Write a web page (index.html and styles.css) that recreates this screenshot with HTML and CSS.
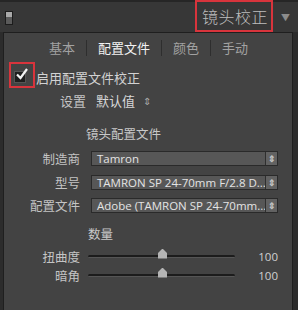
FILE: index.html
```html
<!DOCTYPE html>
<html lang="zh">
<head>
  <meta charset="utf-8">
  <title>镜头校正</title>
  <link rel="stylesheet" href="styles.css">
</head>
<body>
  <div class="header">
    <span class="toggle"></span>
    <span class="title">镜头校正</span>
    <span class="arrow">▼</span>
  </div>
  <div class="panel">
    <div class="tabs">
      <span class="tab">基本</span>
      <span class="sep"></span>
      <span class="tab active">配置文件</span>
      <span class="sep"></span>
      <span class="tab">颜色</span>
      <span class="sep"></span>
      <span class="tab">手动</span>
    </div>

    <div class="check-row">
      <span class="check-mark">
        <span class="box"></span>
        <svg class="tick" width="14" height="14" viewBox="0 0 14 14"><path d="M2 7.5 L5.5 11 L12 2" fill="none" stroke="#f2f2f2" stroke-width="2.2"/></svg>
      </span>
      <span class="check-text">启用配置文件校正</span>
    </div>

    <div class="setting">
      <span class="setting-label">设置</span>
      <span class="setting-value">默认值</span>
      <span class="updown">⇕</span>
    </div>

    <div class="section-title">镜头配置文件</div>

    <div class="row">
      <span class="label">制造商</span>
      <div class="select"><span class="select-text">Tamron</span><span class="stepper">⇕</span></div>
    </div>
    <div class="row">
      <span class="label">型号</span>
      <div class="select"><span class="select-text">TAMRON SP 24-70mm F/2.8 D...</span><span class="stepper">⇕</span></div>
    </div>
    <div class="row">
      <span class="label">配置文件</span>
      <div class="select"><span class="select-text">Adobe (TAMRON SP 24-70mm...</span><span class="stepper">⇕</span></div>
    </div>

    <div class="section-title amount">数量</div>

    <div class="slider-row">
      <span class="label">扭曲度</span>
      <div class="track"><span class="thumb"></span></div>
      <span class="value">100</span>
    </div>
    <div class="slider-row">
      <span class="label">暗角</span>
      <div class="track"><span class="thumb"></span></div>
      <span class="value">100</span>
    </div>
  </div>
</body>
</html>
```

FILE: styles.css
```css
*{
  margin: 0;
  padding: 0;
  box-sizing: border-box;
}

body{
  width: 298px;
  height: 310px;
  overflow: hidden;
  background: #2c2c2c;
  font-family: "Noto Sans CJK SC", "Noto Sans", sans-serif;
  color: #c4c4c4;
}

.header{
  height: 32px;
  border-top: 2px solid #262626;
  background: #373737;
  display: flex;
  align-items: center;
  position: relative;
}

.toggle{
  width: 8px;
  height: 14px;
  margin: 1px 0 0 5px;
  border: 1px solid #1c1c1c;
  background: linear-gradient(#a9a9a9 0 45%, #5a5a5a 45% 100%);
}

.title{
  margin-left: auto;
  height: 32px;
  margin-top: -2px;
  padding: 0 3px 0 5px;
  border: 2.5px solid #d8343c;
  font-size: 16px;
  font-weight: 300;
  line-height: 28px;
  letter-spacing: 0.5px;
  color: #bdbdbd;
}

.arrow{
  width: 25px;
  text-align: center;
  font-size: 9px;
  color: #8c8c8c;
}

.panel{
  margin: 0 5px 0 3px;
  height: 278px;
  background: #434343;
  border-left: 1px solid #1f1f1f;
  border-right: 1px solid #1f1f1f;
  border-top: 1px solid #1f1f1f;
}

.tabs{
  height: 29px;
  display: flex;
  align-items: center;
  padding-left: 34px;
  font-size: 13px;
}

.tab{
  padding: 0 11px;
  color: #a2a2a2;
}

.tab.active{
  color: #f2f2f2;
}

.sep{
  width: 1px;
  height: 16px;
  background: #2e2e2e;
}

.check-row{
  height: 26px;
  display: flex;
  align-items: flex-end;
}

.check-mark{
  position: relative;
  width: 26px;
  height: 26px;
  margin-left: 5px;
  border: 2.5px solid #d8343c;
}

.box{
  position: absolute;
  left: 3px;
  top: 7px;
  width: 12px;
  height: 12px;
  background: #1e1e1e;
  border: 1px solid #555;
}

.tick{
  position: absolute;
  left: 4px;
  top: 3px;
}

.check-text{
  margin-left: 1px;
  margin-bottom: 1px;
  font-size: 13px;
  color: #d2d2d2;
}

.setting{
  height: 24px;
  display: flex;
  align-items: center;
  padding-left: 56px;
  font-size: 13px;
}

.setting-value{
  margin-left: 10px;
  color: #d8d8d8;
}

.updown{
  margin-left: 8px;
  font-size: 10px;
  color: #a8a8a8;
}

.section-title{
  height: 26px;
  margin-top: 9px;
  padding-left: 82px;
  font-size: 12.5px;
  line-height: 26px;
  color: #c8c8c8;
}

.row{
  height: 23.5px;
  display: flex;
  align-items: center;
}

.label{
  width: 76px;
  text-align: right;
  font-size: 12.5px;
  color: #c4c4c4;
}

.select{
  margin-left: 11px;
  width: 187px;
  height: 15px;
  display: flex;
  background: #575757;
  border: 1px solid #2a2a2a;
}

.select-text{
  flex: 1;
  padding-left: 5px;
  font-family: "Open Sans", "Noto Sans", sans-serif;
  font-size: 11.5px;
  line-height: 13px;
  color: #e4e4e4;
  white-space: nowrap;
  overflow: hidden;
}

.stepper{
  width: 12px;
  border-left: 1px solid #2f2f2f;
  background: #626262;
  font-size: 9px;
  font-weight: bold;
  line-height: 13px;
  text-align: center;
  color: #c4c4c4;
}

.amount{
  margin-top: 3px;
  padding-left: 84px;
}

.slider-row{
  height: 19px;
  display: flex;
  align-items: center;
}

.track{
  position: relative;
  margin-left: 8px;
  width: 147px;
  height: 3px;
  background: #1c1c1c;
  border-bottom: 1px solid #555;
  border-radius: 2px;
}

.thumb{
  position: absolute;
  left: 70px;
  top: -6px;
  width: 9px;
  height: 10px;
  background: #b4b4b4;
  clip-path: polygon(50% 0, 100% 45%, 100% 100%, 0 100%, 0 45%);
}

.value{
  margin-left: auto;
  margin-right: 14px;
  font-family: "Open Sans", "Noto Sans", sans-serif;
  font-size: 11.5px;
  color: #d0d0d0;
}
```
